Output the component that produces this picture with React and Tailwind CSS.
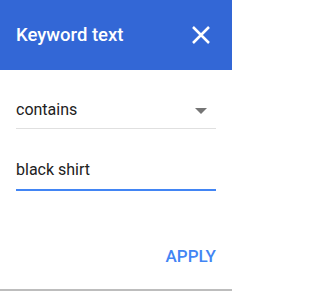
import React from "react";

export default function App() {
  return (
    <div className="w-[232px] h-[291px] bg-white flex flex-col border-b-[2px] border-[#bdbdbd] font-['Roboto',sans-serif]">
      {/* header */}
      <div className="h-[70px] bg-[#3367d6] flex items-center justify-between pl-4 pr-[22px] shrink-0">
        <span className="text-white text-[18.5px] font-medium leading-none">Keyword text</span>
        <svg width="18" height="18" viewBox="0 0 18 18" className="block">
          <path d="M1 1L17 17M17 1L1 17" stroke="white" strokeWidth="2.5" />
        </svg>
      </div>

      <div className="px-4 flex flex-col">
        {/* select */}
        <div className="mt-[32px] pb-[10px] flex items-center justify-between border-b border-[#e0e0e0]">
          <span className="text-[16px] text-[#212121] leading-4">contains</span>
          <svg width="12" height="6" viewBox="0 0 12 6" className="mr-[9px] mt-[2px]">
            <path d="M0 0H12L6 6Z" fill="#757575" />
          </svg>
        </div>

        {/* input */}
        <div className="mt-[33px] pb-[11px] flex items-center border-b-2 border-[#4285f4]">
          <span className="text-[16px] text-[#212121] leading-4">black shirt</span>
        </div>

        {/* actions */}
        <div className="mt-[57px] flex justify-end">
          <span className="text-[17px] font-medium text-[#4285f4] leading-none">APPLY</span>
        </div>
      </div>
    </div>
  );
}
